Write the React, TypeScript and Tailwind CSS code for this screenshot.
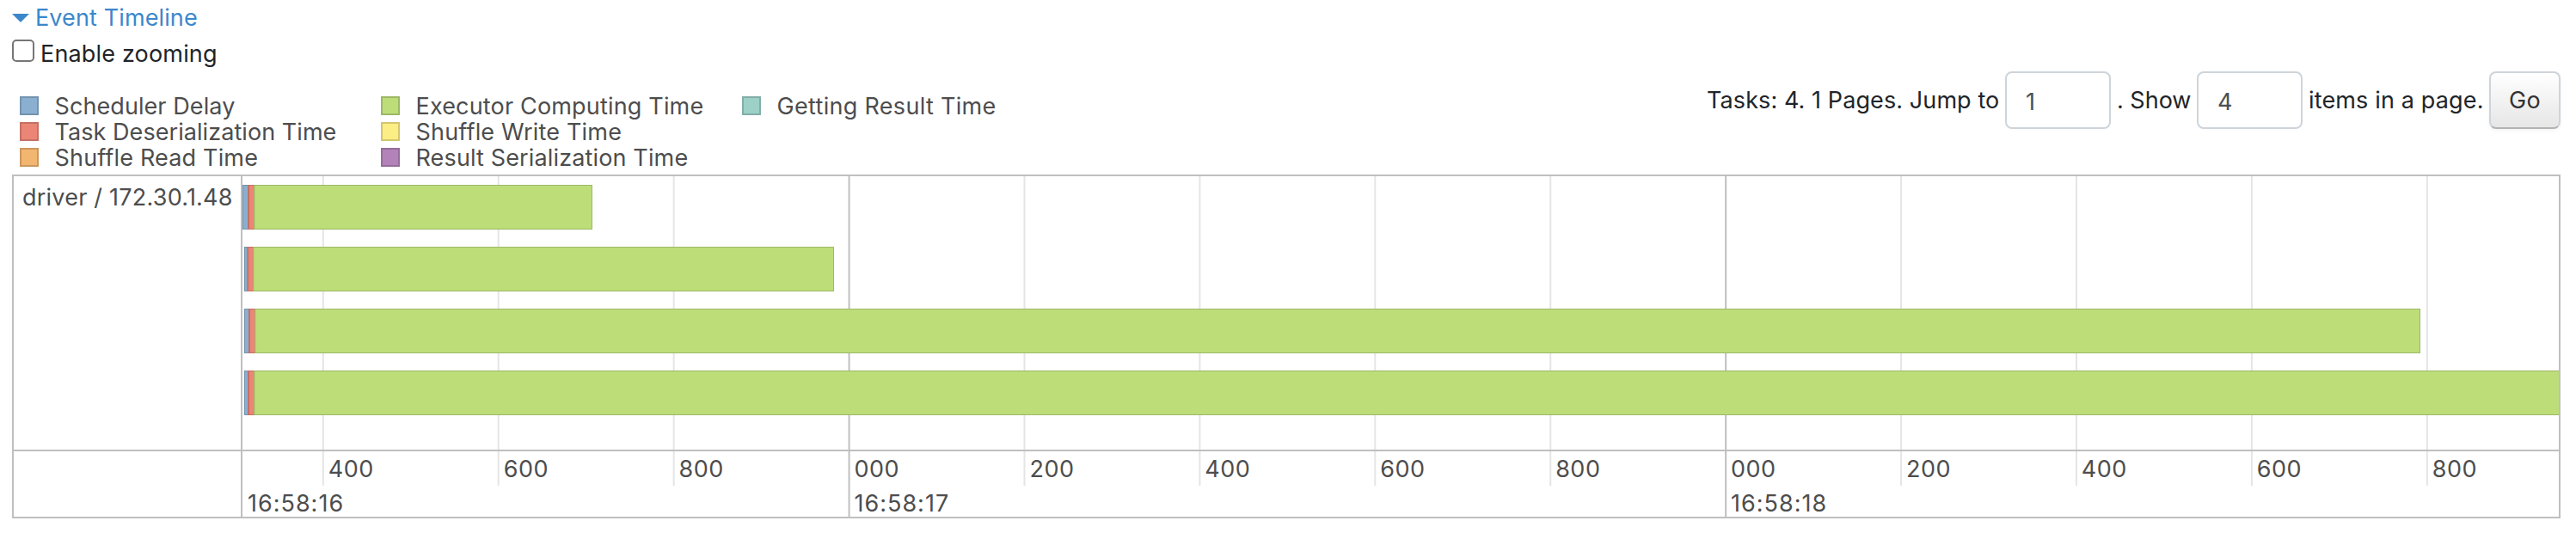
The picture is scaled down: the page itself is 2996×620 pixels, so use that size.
import { clsx } from "clsx";

const legend = [
  [
    { label: "Scheduler Delay", swatch: "bg-[#8aafd0] border-[#7393ae]", tracking: "tracking-[0.08px]" },
    { label: "Task Deserialization Time", swatch: "bg-[#eb8677] border-[#c47064]", tracking: "tracking-[0.06px]" },
    { label: "Shuffle Read Time", swatch: "bg-[#f2b671] border-[#ca985e]", tracking: "tracking-[0.17px]" },
  ],
  [
    { label: "Executor Computing Time", swatch: "bg-[#bddd79] border-[#9db865]", tracking: "tracking-[0.17px]" },
    { label: "Shuffle Write Time", swatch: "bg-[#fcee84] border-[#d3c66e]", tracking: "tracking-[0.19px]" },
    { label: "Result Serialization Time", swatch: "bg-[#b382b9] border-[#966d9a]", tracking: "tracking-[0.14px]" },
  ],
  [{ label: "Getting Result Time", swatch: "bg-[#9dd1c8] border-[#82aea7]", tracking: "tracking-[0.31px]" }],
];

// Horizontal scale of the plot: 200 ms per minor tick
const STEP = 203.92;
const FIRST_TICK = 92.8;
const ticks = ["400", "600", "800", "000", "200", "400", "600", "800", "000", "200", "400", "600", "800"];

const tasks = [
  { delay: 0, deserialize: 6, compute: 13.3, end: 407 },
  { delay: 2, deserialize: 5.3, compute: 12.3, end: 688 },
  { delay: 2, deserialize: 7, compute: 14.3, end: 2533 },
  { delay: 2, deserialize: 6, compute: 13.3, end: 2720 },
];

const Bar = ({ from, to, y, fill, stroke }: { from: number; to: number; y: number; fill: string; stroke: string }) => (
  <rect x={from + 0.5} y={y + 0.5} width={to - from - 1} height={51} fill={fill} stroke={stroke} />
);

const Plot = () => (
  <svg className="block" width={2694} height={318} viewBox="0 0 2694 318">
    {ticks.map((tick, i) => (
      <rect key={i} x={FIRST_TICK + i * STEP} y={0} width={2} height={318} fill={tick === "000" ? "#bfbfbf" : "#e5e5e5"} />
    ))}
    {tasks.map((task, i) => {
      const y = 10 + i * 72;
      return (
        <g key={i}>
          <Bar from={task.delay} to={task.deserialize + 1} y={y} fill="#8aafd0" stroke="#7393ae" />
          <Bar from={task.deserialize} to={task.compute + 1} y={y} fill="#eb8677" stroke="#c47064" />
          <rect x={task.deserialize + 1} y={y + 1} width={1} height={50} fill="#c47064" />
          <Bar from={task.compute} to={task.end} y={y} fill="#bddd79" stroke="#9db865" />
        </g>
      );
    })}
  </svg>
);

const Axis = () => (
  <div className="relative h-[76px] overflow-hidden">
    <svg className="absolute inset-0" width={2694} height={76}>
      {ticks.map((tick, i) => (
        <rect
          key={i}
          x={FIRST_TICK + i * STEP}
          y={0}
          width={2}
          height={tick === "000" ? 76 : 40}
          fill={tick === "000" ? "#bfbfbf" : "#e5e5e5"}
        />
      ))}
    </svg>
    <div className="relative flex h-10 pl-[92.8px] leading-[41px] tracking-[0.5px]">
      {ticks.map((tick, i) => (
        <div key={i} className="w-[203.92px] shrink-0 pl-[7px]">
          {tick}
        </div>
      ))}
    </div>
    <div className="relative flex h-9 leading-[41px] tracking-[1px]">
      <div className="w-[704.5px] shrink-0 pl-[6px]">16:58:16</div>
      <div className="w-[1019.6px] shrink-0 pl-[7px]">16:58:17</div>
      <div className="pl-[7px]">16:58:18</div>
    </div>
  </div>
);

const PageForm = () => (
  <div className="mt-[11px] flex h-[67px] items-center whitespace-nowrap">
    <span className="w-[347px] pt-[2px] tracking-[0.09px]">Tasks: 4. 1 Pages. Jump to</span>
    <input
      className="h-[67px] w-[123px] rounded-lg border-2 border-[#ced4da] bg-white px-[22px] pt-[3px] text-[#495057]"
      defaultValue="1"
    />
    <span className="w-[100px] pt-[2px] pl-[7px]">. Show</span>
    <input
      className="h-[67px] w-[123px] rounded-lg border-2 border-[#ced4da] bg-white px-[22px] pt-[3px] text-[#495057]"
      defaultValue="4"
    />
    <span className="w-[217px] pt-[2px] pl-[7px] tracking-[0.15px]">items in a page.</span>
    <button className="h-[67px] w-[83px] rounded-lg border-2 border-[#ced4da] border-b-[#b3b3b3] bg-linear-to-b from-white to-[#e6e6e6] pt-[2px] tracking-[0.4px] text-[#333] shadow-[0_2px_4px_rgba(0,0,0,0.05)]">
      Go
    </button>
  </div>
);

export default function App() {
  return (
    <div className="h-[620px] w-[2996px] overflow-hidden bg-white pr-[18px] pl-[14px] font-['Inter',sans-serif] text-[27px] text-[#212529]">
      <a className="flex h-10 items-center gap-[7px] leading-[42px] text-[#3c87cb]">
        <svg width={20} height={10} className="mt-[2px]">
          <path d="M0 0h20L10 10z" fill="currentColor" />
        </svg>
        <span className="pt-px tracking-[0.12px]">Event Timeline</span>
      </a>
      <label className="mt-[2px] flex h-[30px] leading-[41px]">
        <input type="checkbox" className="mt-1 size-[26px] appearance-none rounded-[5px] border-2 border-[#767676]" />
        <span className="pl-[7px] tracking-[0.17px]">Enable zooming</span>
      </label>
      <div className="flex h-[131px] justify-between">
        <div className="mt-9 flex pl-[9px] text-[#4d4d4d]">
          {legend.map((column, i) => (
            <ul key={i} className="w-[420px]">
              {column.map((item) => (
                <li key={item.label} className="flex h-[30px] items-start leading-[31px] whitespace-nowrap">
                  <span className={clsx("mt-1 mr-[18.5px] size-[22px] border-2", item.swatch)} />
                  <span className={item.tracking}>{item.label}</span>
                </li>
              ))}
            </ul>
          ))}
        </div>
        <PageForm />
      </div>
      <div className="flex h-[400px] border-2 border-[#bfbfbf] text-[#4d4d4d]">
        <div className="w-[266px] shrink-0 border-r-2 border-[#bfbfbf]">
          <div className="h-[320px] border-b-2 border-[#bfbfbf] pt-[4px] pl-[10px] leading-[41px] tracking-[0.22px] whitespace-nowrap">
            driver / 172.30.1.48
          </div>
        </div>
        <div className="w-[2694px] overflow-hidden">
          <div className="h-[320px] border-b-2 border-[#bfbfbf]">
            <Plot />
          </div>
          <Axis />
        </div>
      </div>
    </div>
  );
}
